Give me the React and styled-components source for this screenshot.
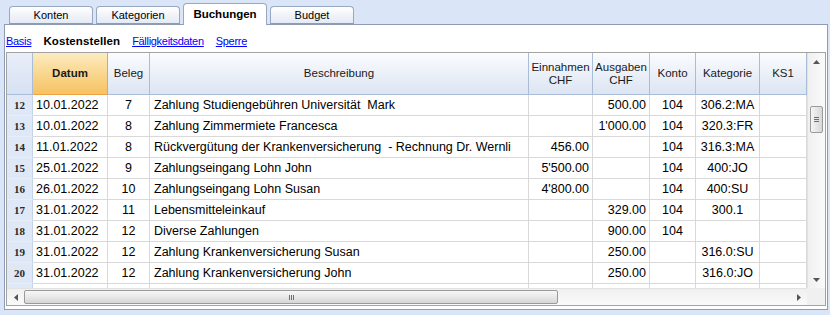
import React from 'react';
import styled, { createGlobalStyle } from 'styled-components';

const GlobalStyle = createGlobalStyle`
  html, body { margin: 0; padding: 0; background: #dae5f7; }
  body { font-family: "Liberation Sans", Arial, sans-serif; overflow: hidden; }
`;

const Window = styled.div`
  width: 830px;
  height: 315px;
  box-sizing: border-box;
  padding-left: 4px;
  background: #dae5f7;
  display: flex;
  flex-direction: column;
`;

const TabBar = styled.div`
  display: flex;
  align-items: flex-end;
  gap: 3px;
  height: 24px;
  padding-left: 5px;
  position: relative;
  z-index: 1;
`;

const Tab = styled.div`
  width: 84px;
  box-sizing: border-box;
  height: ${p => (p.$active ? 22 : 18)}px;
  margin-bottom: ${p => (p.$active ? -1 : 0)}px;
  padding-bottom: ${p => (p.$active ? 2 : 0)}px;
  border: 1px solid #98a8c3;
  border-bottom: ${p => (p.$active ? 'none' : '1px solid #8d9bb5')};
  border-radius: 4px 4px 0 0;
  background: ${p => (p.$active ? '#ffffff' : 'linear-gradient(#ffffff, #e4e9f3)')};
  display: flex;
  align-items: center;
  justify-content: center;
  font-size: ${p => (p.$active ? 11.5 : 11)}px;
  font-weight: ${p => (p.$active ? 700 : 400)};
  color: #000;
`;

const Panel = styled.div`
  width: 824px;
  height: 286px;
  box-sizing: border-box;
  border: 1px solid #8d9bb5;
  background: #ffffff;
  padding: 0 1px;
  display: flex;
  flex-direction: column;
`;

const LinkBar = styled.div`
  height: 27px;
  box-sizing: border-box;
  padding: 4px 0 0 0;
  display: flex;
  align-items: center;
  gap: 12px;
  font-size: 11px;
`;

const LinkItem = styled.span`
  color: ${p => (p.$current ? '#000' : '#0000ff')};
  text-decoration: ${p => (p.$current ? 'none' : 'underline')};
  font-weight: ${p => (p.$current ? 700 : 400)};
  font-size: ${p => (p.$current ? '11.5px' : '11px')};
  letter-spacing: ${p => (p.$current ? '0.1px' : '-0.3px')};
`;

const Grid = styled.div`
  width: 820px;
  height: 254px;
  box-sizing: border-box;
  border: 1px solid #a3a3a3;
  display: flex;
  flex-direction: column;
`;

const Main = styled.div`
  display: flex;
  height: 235px;
`;

const Table = styled.div`
  width: 800px;
  overflow: hidden;
  display: flex;
  flex-direction: column;
`;

const HeadRow = styled.div`
  display: flex;
  height: 42px;
  flex: none;
`;

const HeadCell = styled.div`
  width: ${p => p.$w}px;
  flex: none;
  box-sizing: border-box;
  display: flex;
  align-items: center;
  justify-content: center;
  text-align: center;
  font-size: 11.5px;
  line-height: 13px;
  color: #1a1a1a;
  font-weight: ${p => (p.$sel ? 700 : 400)};
  background: ${p =>
    p.$sel
      ? 'linear-gradient(#fdebc0, #f9d78f 50%, #f6c262)'
      : p.$corner
      ? 'linear-gradient(#e9eff9, #d6e1f2)'
      : 'linear-gradient(#fbfcfe, #e8eef7 60%, #dce5f2)'};
  border-right: 1px solid ${p => (p.$sel ? '#f0a245' : '#a9bdd8')};
  border-bottom: 1px solid ${p => (p.$sel ? '#f0a245' : '#a9bdd8')};
`;

const Row = styled.div`
  display: flex;
  height: 21px;
  flex: none;
`;

const Cell = styled.div`
  width: ${p => p.$w}px;
  flex: none;
  box-sizing: border-box;
  border-right: 1px solid #d9d9d9;
  border-bottom: 1px solid #d9d9d9;
  font-size: 12.5px;
  line-height: 20px;
  color: #000;
  white-space: pre;
  overflow: hidden;
  text-align: ${p => p.$align || 'left'};
  padding: 0 ${p => (p.$align === 'right' ? 3 : 0)}px 0 ${p => p.$pl ?? 0}px;
`;

const NumCell = styled.div`
  width: 26px;
  flex: none;
  box-sizing: border-box;
  background: #dfe8f6;
  border-right: 1px solid #c5d3e8;
  border-bottom: 1px solid #e8eef8;
  font-family: "Liberation Serif", "Times New Roman", serif;
  font-size: 11px;
  font-weight: 700;
  line-height: 21px;
  color: #2a2a2a;
  text-align: center;
`;

const VScroll = styled.div`
  width: 18px;
  box-sizing: border-box;
  border-left: 1px solid #e2e2e2;
  background: linear-gradient(to right, #f0f0f0, #fafafa);
  display: flex;
  flex-direction: column;
  align-items: center;
`;

const ArrowBtn = styled.div`
  width: 17px;
  height: 17px;
  flex: none;
  display: flex;
  align-items: center;
  justify-content: center;
`;

const VTrack = styled.div`
  flex: 1;
  width: 100%;
  padding-top: 36px;
  display: flex;
  justify-content: center;
`;

const VThumb = styled.div`
  width: 13px;
  height: 27px;
  box-sizing: border-box;
  border: 1px solid #9a9a9a;
  border-radius: 2px;
  background: linear-gradient(to right, #f6f6f6, #e6e6e6 50%, #d8d8d8);
  display: flex;
  flex-direction: column;
  align-items: center;
  justify-content: center;
  gap: 1px;
`;

const GripH = styled.div`
  width: 5px;
  height: 1px;
  background: #6e6e6e;
`;

const HScrollRow = styled.div`
  display: flex;
  height: 17px;
`;

const HScroll = styled.div`
  width: 800px;
  box-sizing: border-box;
  border-top: 1px solid #e2e2e2;
  background: linear-gradient(#f0f0f0, #fafafa);
  display: flex;
  align-items: center;
`;

const HTrack = styled.div`
  flex: 1;
  height: 100%;
  display: flex;
  align-items: center;
`;

const HThumb = styled.div`
  width: 534px;
  height: 14px;
  box-sizing: border-box;
  border: 1px solid #9a9a9a;
  border-radius: 2px;
  background: linear-gradient(#f8f8f8, #e8e8e8 50%, #d6d6d6);
  display: flex;
  align-items: center;
  justify-content: center;
  gap: 1px;
`;

const GripV = styled.div`
  width: 1px;
  height: 5px;
  background: #6e6e6e;
`;

const Corner = styled.div`
  width: 18px;
  background: #f0f0f0;
`;

const Tri = ({ dir }) => {
  const pts = {
    up: '0,4 3.5,0 7,4',
    down: '0,0 3.5,4 7,0',
    left: '4,0 0,3.5 4,7',
    right: '0,0 4,3.5 0,7',
  }[dir];
  const vertical = dir === 'up' || dir === 'down';
  return (
    <svg width={vertical ? 7 : 4} height={vertical ? 4 : 7} viewBox={vertical ? '0 0 7 4' : '0 0 4 7'}>
      <polygon points={pts} fill="#555" />
    </svg>
  );
};

const cols = [
  { key: 'd', w: 75, label: 'Datum', sel: true, pl: 3 },
  { key: 'b', w: 42, label: 'Beleg', align: 'center' },
  { key: 't', w: 379, label: 'Beschreibung', pl: 4 },
  { key: 'e', w: 64, label: 'Einnahmen\nCHF', align: 'right' },
  { key: 'a', w: 57, label: 'Ausgaben\nCHF', align: 'right' },
  { key: 'k', w: 46, label: 'Konto', align: 'center' },
  { key: 'c', w: 64, label: 'Kategorie', align: 'center' },
  { key: 's', w: 47, label: 'KS1', align: 'center' },
];

const rows = [
  { n: 12, d: '10.01.2022', b: '7', t: 'Zahlung Studiengebühren Universität  Mark', e: '', a: '500.00', k: '104', c: '306.2:MA' },
  { n: 13, d: '10.01.2022', b: '8', t: 'Zahlung Zimmermiete Francesca', e: '', a: "1'000.00", k: '104', c: '320.3:FR' },
  { n: 14, d: '11.01.2022', b: '8', t: 'Rückvergütung der Krankenversicherung  - Rechnung Dr. Wernli', e: '456.00', a: '', k: '104', c: '316.3:MA' },
  { n: 15, d: '25.01.2022', b: '9', t: 'Zahlungseingang Lohn John', e: "5'500.00", a: '', k: '104', c: '400:JO' },
  { n: 16, d: '26.01.2022', b: '10', t: 'Zahlungseingang Lohn Susan', e: "4'800.00", a: '', k: '104', c: '400:SU' },
  { n: 17, d: '31.01.2022', b: '11', t: 'Lebensmitteleinkauf', e: '', a: '329.00', k: '104', c: '300.1' },
  { n: 18, d: '31.01.2022', b: '12', t: 'Diverse Zahlungen', e: '', a: '900.00', k: '104', c: '' },
  { n: 19, d: '31.01.2022', b: '12', t: 'Zahlung Krankenversicherung Susan', e: '', a: '250.00', k: '', c: '316.0:SU' },
  { n: 20, d: '31.01.2022', b: '12', t: 'Zahlung Krankenversicherung John', e: '', a: '250.00', k: '', c: '316.0:JO' },
  { n: '', d: '', b: '', t: '', e: '', a: '', k: '', c: '' },
];

const HeadLabel = styled.span`
  white-space: pre-line;
`;

export default function App() {
  return (
    <>
      <GlobalStyle />
      <Window>
        <TabBar>
          <Tab>Konten</Tab>
          <Tab>Kategorien</Tab>
          <Tab $active>Buchungen</Tab>
          <Tab>Budget</Tab>
        </TabBar>
        <Panel>
          <LinkBar>
            <LinkItem>Basis</LinkItem>
            <LinkItem $current>Kostenstellen</LinkItem>
            <LinkItem>Fälligkeitsdaten</LinkItem>
            <LinkItem>Sperre</LinkItem>
          </LinkBar>
          <Grid>
            <Main>
              <Table>
                <HeadRow>
                  <HeadCell $w={26} $corner />
                  {cols.map(c => (
                    <HeadCell key={c.key} $w={c.w} $sel={c.sel}>
                      <HeadLabel>{c.label}</HeadLabel>
                    </HeadCell>
                  ))}
                </HeadRow>
                {rows.map((r, i) => (
                  <Row key={i}>
                    <NumCell>{r.n}</NumCell>
                    {cols.map(c => (
                      <Cell key={c.key} $w={c.w} $align={c.align} $pl={c.pl}>
                        {r[c.key] || ''}
                      </Cell>
                    ))}
                  </Row>
                ))}
              </Table>
              <VScroll>
                <ArrowBtn><Tri dir="up" /></ArrowBtn>
                <VTrack>
                  <VThumb><GripH /><GripH /><GripH /></VThumb>
                </VTrack>
                <ArrowBtn><Tri dir="down" /></ArrowBtn>
              </VScroll>
            </Main>
            <HScrollRow>
              <HScroll>
                <ArrowBtn><Tri dir="left" /></ArrowBtn>
                <HTrack>
                  <HThumb><GripV /><GripV /><GripV /></HThumb>
                </HTrack>
                <ArrowBtn><Tri dir="right" /></ArrowBtn>
              </HScroll>
              <Corner />
            </HScrollRow>
          </Grid>
        </Panel>
      </Window>
    </>
  );
}
